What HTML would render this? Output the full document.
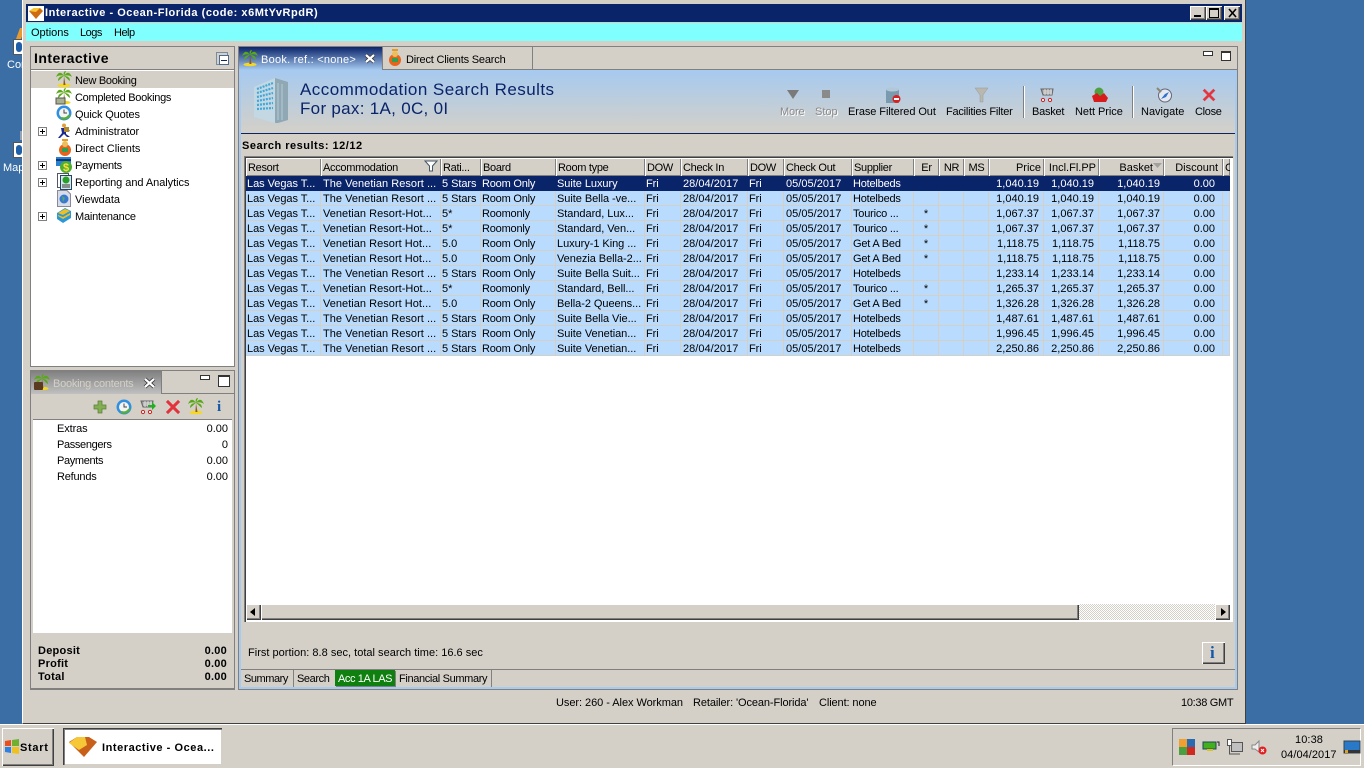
<!DOCTYPE html>
<html><head><meta charset="utf-8"><title>Interactive</title>
<style>
html,body{margin:0;padding:0;width:1364px;height:768px;overflow:hidden;background:#3a6ea5;font:11px "Liberation Sans",sans-serif;letter-spacing:0;color:#000}
.a{position:absolute;white-space:nowrap}
svg{position:absolute;overflow:visible}
.face{background:#d4d0c8}
.up{background:#d4d0c8;box-shadow:inset 1px 1px #fff,inset -1px -1px #404040,inset -2px -2px #808080}
.box{border:1px solid #808080;box-sizing:border-box}
.tree{left:75px}
.ex{left:38px;width:7px;height:7px;border:1px solid #808080;background:linear-gradient(#000,#000) center/5px 1px no-repeat,linear-gradient(#000,#000) center/1px 5px no-repeat,#fff}
table{position:absolute;left:246px;top:158px;width:984px;border-collapse:separate;border-spacing:0;table-layout:fixed}
th{height:18px;padding:2px 2px 0;background:#d4d0c8;box-shadow:inset 1px 1px #fff,inset -1px -1px #808080;font-weight:normal;text-align:left;overflow:hidden;white-space:nowrap;box-sizing:border-box;letter-spacing:-.3px;line-height:15px}
td{height:15px;padding:2px 1px 0;background:#b9dbfd;border-right:1px solid #d4d0c8;border-bottom:1px solid #d4d0c8;overflow:hidden;white-space:nowrap;box-sizing:border-box;line-height:12px;letter-spacing:-.05px}
td:nth-child(4),td:nth-child(10){letter-spacing:-.2px}
td:nth-child(2),td:nth-child(7),td:nth-child(9){letter-spacing:.03px;padding-left:2px}
tr.s td{background:#0a246a;color:#fff;border-color:#0a246a}
.r{text-align:right;padding-right:4px;letter-spacing:0}
td.r{letter-spacing:0;padding-right:4px}
td:nth-child(17).r{padding-right:7px}
td:nth-child(16).r{padding-right:3px}
.c{text-align:center}
</style></head><body>
<svg width="0" height="0" style="position:absolute"><defs>
<g id="palm"><ellipse cx="8" cy="14.5" rx="6.5" ry="1.8" fill="#f5d820"/><path d="M8 5L9.500 14H7.400Z" fill="#8a5a20"/><path d="M8 5C5 0 2 1 0 6C3 4 5 4 8 5ZM8 5C11 0 14 1 16 6C13 4 11 4 8 5ZM8 5C7 2 8 0 10 0C9 2 9 3 8 5ZM8 5C5 5 2 6 2 10C5 8 6 6 8 5ZM8 5C11 5 14 6 14 10C11 8 10 6 8 5Z" fill="#5aa818"/></g>
<g id="clock"><circle cx="8" cy="8" r="7.5" fill="#2f8fe0"/><circle cx="8" cy="8" r="5" fill="#f4f4f4"/><path d="M8 4.500V8H11" stroke="#444" fill="none"/><path d="M4 13C7 16 12 15 15 10L12 10C11 12 8 13 6 12Z" fill="#58b030"/></g>
<g id="cart"><path d="M1 2H13L12 8H3Z" fill="#999" stroke="#666"/><path d="M3 4H12M3 6H12M5 2V8M8 2V8M11 2V8" stroke="#ddd"/><circle cx="3" cy="13" r="1.6" fill="#fff" stroke="#d02020"/><circle cx="10" cy="13" r="1.6" fill="#fff" stroke="#d02020"/></g>
<g id="x"><path d="M3 1L8 6L13 1L15 3L10 8L15 13L13 15L8 10L3 15L1 13L6 8L1 3Z" fill="#e8303a" stroke="#c8606a" stroke-width=".5"/></g>
</defs></svg>

<!-- desktop icons -->
<div class="a" style="left:13px;top:39px;width:11px;height:16px;background:#fff;border:1px solid #555;box-sizing:border-box"></div>
<div class="a" style="left:16px;top:42px;width:6px;height:10px;background:#1f5fa8;border-radius:3px"></div>
<div class="a" style="left:18px;top:28px;width:5px;height:11px;background:#e89a30;transform:skewX(-20deg)"></div>
<div class="a" style="left:7px;top:59px;color:#fff;font-size:11px">Con</div>
<div class="a" style="left:20px;top:131px;width:3px;height:9px;background:#9aa4b0"></div>
<div class="a" style="left:13px;top:142px;width:11px;height:16px;background:#fff;border:1px solid #555;box-sizing:border-box"></div>
<div class="a" style="left:16px;top:145px;width:6px;height:10px;background:#1f5fa8;border-radius:3px"></div>
<div class="a" style="left:3px;top:162px;color:#fff;font-size:11px">Map</div>

<!-- window -->
<div class="a face" style="left:22px;top:0;width:1224px;height:724px;border-left:1px solid #fff;border-right:1px solid #404040;border-bottom:1px solid #404040;box-sizing:border-box"></div>
<div class="a" style="left:26px;top:4px;width:1216px;height:18px;background:#0a246a"></div>
<svg style="left:28px;top:6px" width="16" height="15"><rect width="16" height="15" fill="#fff"/><path d="M1 5L6 2H12L15 5L8 13Z" fill="#d06a10"/><path d="M1 5L6 2H12L8 6Z" fill="#f6c430"/></svg>
<div class="a" style="left:45px;top:6px;color:#fff;font:bold 11px/15px 'Liberation Sans',sans-serif;letter-spacing:.53px">Interactive - Ocean-Florida (code: x6MtYvRpdR)</div>
<div class="a up" style="left:1190px;top:6px;width:16px;height:14px"></div>
<div class="a" style="left:1194px;top:15px;width:7px;height:2px;background:#000"></div>
<div class="a up" style="left:1206px;top:6px;width:16px;height:14px"></div>
<div class="a" style="left:1209px;top:8px;width:10px;height:10px;border:1px solid #000;border-top-width:2px;box-sizing:border-box"></div>
<div class="a up" style="left:1224px;top:6px;width:16px;height:14px"></div>
<svg style="left:1228px;top:9px" width="9" height="8"><path d="M1 0L8 8M8 0L1 8" stroke="#000" stroke-width="1.6"/></svg>
<div class="a" style="left:26px;top:23px;width:1216px;height:18px;background:#80ffff"></div>
<div class="a" style="left:31px;top:26px;line-height:14px">Options</div>
<div class="a" style="left:80px;top:26px;line-height:14px;letter-spacing:-.5px">Logs</div>
<div class="a" style="left:114px;top:26px;line-height:14px;letter-spacing:-.5px">Help</div>

<!-- left panel 1 -->
<div class="a box" style="left:30px;top:46px;width:205px;height:321px;background:#fff"></div>
<div class="a face" style="left:31px;top:47px;width:203px;height:22px;border-bottom:1px solid #808080"></div>
<div class="a" style="left:34px;top:50px;font:bold 14px/17px 'Liberation Sans',sans-serif;letter-spacing:.45px">Interactive</div>
<div class="a" style="left:216px;top:52px;width:10px;height:11px;border:1px solid #7a8aa0"></div>
<div class="a" style="left:219px;top:55px;width:10px;height:10px;border:1px solid #4a6a90;background:#fff;box-sizing:border-box"></div>
<div class="a" style="left:221px;top:60px;width:6px;height:1px;background:#0a246a"></div>
<div class="a face" style="left:31px;top:71px;width:203px;height:17px"></div>
<div class="a tree" style="top:74px;line-height:14px;letter-spacing:-.3px">New Booking</div>
<div class="a tree" style="top:91px;line-height:14px;letter-spacing:-.3px">Completed Bookings</div>
<div class="a tree" style="top:108px;line-height:14px;letter-spacing:-.15px">Quick Quotes</div>
<div class="a tree" style="top:125px;line-height:14px;letter-spacing:-.05px">Administrator</div>
<div class="a tree" style="top:142px;line-height:14px">Direct Clients</div>
<div class="a tree" style="top:159px;line-height:14px;letter-spacing:-.25px">Payments</div>
<div class="a tree" style="top:176px;line-height:14px;letter-spacing:-.05px">Reporting and Analytics</div>
<div class="a tree" style="top:193px;line-height:14px">Viewdata</div>
<div class="a tree" style="top:210px;line-height:14px;letter-spacing:-.2px">Maintenance</div>
<svg style="left:56px;top:71px" width="16" height="16"><use href="#palm"/></svg>
<svg style="left:56px;top:88px" width="16" height="16"><use href="#palm"/><rect x="0" y="10" width="9" height="6" fill="#a8b090" stroke="#555"/></svg>
<svg style="left:56px;top:105px" width="16" height="16"><use href="#clock"/></svg>
<svg style="left:58px;top:123px" width="15" height="16"><circle cx="6" cy="2.5" r="2" fill="#e0a040"/><path d="M3 5H9L12 8L8 9L8 11L12 14H9L6 11L2 15H0L4 10Z" fill="#1c2a90"/><rect x="6" y="4" width="5" height="5" fill="#b08a30"/></svg>
<svg style="left:57px;top:139px" width="16" height="17"><circle cx="8" cy="11" r="6" fill="#e8641c"/><circle cx="8" cy="5" r="3" fill="#e8c060"/><path d="M5 1H11" stroke="#e89a20" stroke-width="2"/><rect x="5" y="9" width="6" height="4" fill="#30a050"/></svg>
<svg style="left:56px;top:157px" width="16" height="17"><rect width="15" height="9" fill="#2a7fd0"/><rect y="2" width="15" height="2" fill="#103870"/><circle cx="10" cy="10" r="6" fill="#4caf30"/><text x="7" y="14" font-size="11" font-weight="bold" fill="#ffe040" font-family="Liberation Sans">$</text></svg>
<svg style="left:57px;top:173px" width="15" height="17"><rect x=".5" y=".5" width="11" height="14" fill="#fff" stroke="#556"/><rect x="3.500" y="2.500" width="11" height="14" fill="#d8e8e8" stroke="#246"/><circle cx="9" cy="7" r="3.500" fill="#28a028"/><path d="M5 12H13M5 14H13" stroke="#333"/></svg>
<svg style="left:57px;top:190px" width="14" height="17"><path d="M.5.5H10L13.500 4V16.500H.5Z" fill="#d8dce8" stroke="#889"/><circle cx="7" cy="9" r="4.500" fill="#3878d0"/><path d="M5 6L8 8L6 12Z" fill="#58a868"/></svg>
<svg style="left:56px;top:207px" width="16" height="17"><path d="M1 6L9 1L15 4V11L7 16L1 12Z" fill="#2a98d8"/><path d="M2 6L9 2L14 4L7 8ZM2 8L7 10L14 6V8L7 12L2 9Z" fill="#f0c020"/></svg>
<div class="a ex" style="top:127px"></div>
<div class="a ex" style="top:161px"></div>
<div class="a ex" style="top:178px"></div>
<div class="a ex" style="top:212px"></div>

<!-- left panel 2 -->
<div class="a" style="left:30px;top:370px;width:205px;height:320px;background:#d4d0c8;border:1px solid #808080;box-sizing:border-box;border-bottom-width:2px"></div>
<div class="a" style="left:31px;top:371px;width:130px;height:23px;background:linear-gradient(#808080,#c0c0c0);border-right:1px solid #808080"></div>
<div class="a" style="left:161px;top:393px;width:73px;height:1px;background:#808080"></div>
<svg style="left:34px;top:374px" width="16" height="16"><use href="#palm"/><rect x="0" y="8" width="9" height="8" rx="1" fill="#5a3a20"/></svg>
<div class="a" style="left:53px;top:377px;line-height:14px;color:#d4d0c8;letter-spacing:-.25px">Booking contents</div>
<svg style="left:144px;top:378px" width="11" height="10"><path d="M1 1L10 9M10 1L1 9" stroke="#333" stroke-width="3.800"/><path d="M1 1L10 9M10 1L1 9" stroke="#fff" stroke-width="2.200"/></svg>
<div class="a" style="left:200px;top:375px;width:8px;height:3px;background:#fff;border:1px solid #333"></div>
<div class="a" style="left:218px;top:375px;width:10px;height:9px;background:#fff;border:1px solid #333;border-top-width:2px"></div>
<svg style="left:93px;top:400px" width="14" height="14"><path d="M5 1H9V5H13V9H9V13H5V9H1V5H5Z" fill="#80b050" stroke="#607838" stroke-width=".7"/></svg>
<svg style="left:116px;top:399px" width="16" height="16"><use href="#clock"/></svg>
<svg style="left:140px;top:399px" width="16" height="16"><use href="#cart"/><path d="M8 6H12V3L16 7L12 11V8H8Z" fill="#20b020"/></svg>
<svg style="left:165px;top:399px" width="16" height="16"><use href="#x"/></svg>
<svg style="left:188px;top:398px" width="16" height="16"><use href="#palm"/></svg>
<div class="a" style="left:217px;top:397px;font:bold 15px/20px 'Liberation Serif',serif;color:#1458a8">i</div>
<div class="a" style="left:33px;top:419px;width:199px;height:1px;background:#808080"></div>
<div class="a" style="left:33px;top:420px;width:199px;height:213px;background:#fff"></div>
<div class="a" style="left:57px;top:422px;line-height:14px;letter-spacing:-.1px">Extras</div><div class="a" style="right:1136px;top:422px;line-height:14px">0.00</div>
<div class="a" style="left:57px;top:438px;line-height:14px;letter-spacing:-.35px">Passengers</div><div class="a" style="right:1136px;top:438px;line-height:14px">0</div>
<div class="a" style="left:57px;top:454px;line-height:14px;letter-spacing:-.35px">Payments</div><div class="a" style="right:1136px;top:454px;line-height:14px">0.00</div>
<div class="a" style="left:57px;top:470px;line-height:14px;letter-spacing:-.2px">Refunds</div><div class="a" style="right:1136px;top:470px;line-height:14px">0.00</div>
<div class="a" style="left:38px;top:644px;font-weight:bold;line-height:14px;letter-spacing:.25px">Deposit</div><div class="a" style="right:1137px;top:644px;font-weight:bold;line-height:14px;letter-spacing:.25px">0.00</div>
<div class="a" style="left:38px;top:657px;font-weight:bold;line-height:14px;letter-spacing:.25px">Profit</div><div class="a" style="right:1137px;top:657px;font-weight:bold;line-height:14px;letter-spacing:.25px">0.00</div>
<div class="a" style="left:38px;top:670px;font-weight:bold;line-height:14px;letter-spacing:.25px">Total</div><div class="a" style="right:1137px;top:670px;font-weight:bold;line-height:14px;letter-spacing:.25px">0.00</div>

<!-- main panel -->
<div class="a" style="left:238px;top:46px;width:1000px;height:644px;background:#d4d0c8;border:1px solid #808080;box-sizing:border-box"></div>
<div class="a" style="left:239px;top:69px;width:998px;height:1px;background:#808080"></div>
<div class="a" style="left:239px;top:70px;width:2px;height:619px;background:#a6caf0"></div>
<div class="a" style="left:1235px;top:70px;width:2px;height:619px;background:#a6caf0"></div>
<div class="a" style="left:239px;top:687px;width:998px;height:2px;background:#a6caf0"></div>
<div class="a" style="left:239px;top:47px;width:143px;height:23px;background:linear-gradient(#0a246a,#a6caf0)"></div>
<div class="a" style="left:382px;top:47px;width:151px;height:22px;border-left:1px solid #808080;border-right:1px solid #808080;box-sizing:border-box"></div>
<svg style="left:242px;top:50px" width="16" height="16"><use href="#palm"/></svg>
<div class="a" style="left:261px;top:53px;line-height:14px;color:#fff;letter-spacing:.25px">Book. ref.: &lt;none&gt;</div>
<svg style="left:365px;top:54px" width="10" height="9"><path d="M1 1L9 8M9 1L1 8" stroke="#333" stroke-width="3.800"/><path d="M1 1L9 8M9 1L1 8" stroke="#fff" stroke-width="2.200"/></svg>
<svg style="left:387px;top:49px" width="16" height="17"><circle cx="8" cy="11" r="6" fill="#e8641c"/><circle cx="8" cy="5" r="3" fill="#e8c060"/><path d="M5 1H11" stroke="#e89a20" stroke-width="2"/><rect x="5" y="9" width="6" height="4" fill="#30a050"/></svg>
<div class="a" style="left:406px;top:53px;line-height:14px;letter-spacing:-.18px">Direct Clients Search</div>
<div class="a" style="left:1203px;top:51px;width:8px;height:3px;background:#fff;border:1px solid #333"></div>
<div class="a" style="left:1221px;top:51px;width:8px;height:7px;background:#fff;border:1px solid #333;border-top-width:2px"></div>

<div class="a" style="left:241px;top:70px;width:994px;height:63px;background:linear-gradient(#a6caf0,#d4d0c8)"></div>
<div class="a" style="left:241px;top:133px;width:994px;height:1px;background:#0a246a"></div>
<svg style="left:254px;top:78px" width="34" height="46"><path d="M0 9L21 0V45L0 39Z" fill="#c4d8e4"/><path d="M21 0L34 4V42L24 45H21Z" fill="#8fa8b4"/><path d="M3 11L19 5M3 15L19 10M3 19L19 15M3 23L19 20M3 27L19 25M3 31L19 30" stroke="#3fa8d8" stroke-width="2.200" stroke-dasharray="2 1"/><path d="M24 5V42M28 6V42" stroke="#b4ccd6"/></svg>
<div class="a" style="left:300px;top:80px;font:17px/20px 'Liberation Sans',sans-serif;color:#0a246a;letter-spacing:.45px">Accommodation Search Results</div>
<div class="a" style="left:300px;top:99px;font:17px/20px 'Liberation Sans',sans-serif;color:#0a246a;letter-spacing:.3px">For pax: 1A, 0C, 0I</div>

<!-- toolbar -->
<svg style="left:787px;top:90px" width="12" height="10"><path d="M0 0H12L6 9Z" fill="#7a7a7a"/></svg>
<div class="a" style="left:822px;top:90px;width:8px;height:8px;background:#8a8a8a"></div>
<svg style="left:885px;top:87px" width="17" height="17"><path d="M1 2H14V16H1Z" fill="#7a9ab0"/><ellipse cx="7.500" cy="2.500" rx="6.500" ry="2" fill="#b0c8d8"/><circle cx="11.500" cy="12" r="4" fill="#d82020"/><rect x="9" y="11" width="5" height="2" fill="#fff"/></svg>
<svg style="left:975px;top:87px" width="13" height="16"><path d="M0 1H13L8 8V15H5V8Z" fill="#b8b8b0" stroke="#999" stroke-width=".5"/></svg>
<div class="a" style="left:1023px;top:86px;width:1px;height:32px;background:#808080;box-shadow:1px 0 #fff"></div>
<svg style="left:1040px;top:87px" width="16" height="16"><use href="#cart"/></svg>
<svg style="left:1092px;top:87px" width="16" height="16"><circle cx="7" cy="5" r="4.500" fill="#50a040"/><path d="M0 9L5 6L8 9L12 6L16 11L14 15H2Z" fill="#d81c1c"/></svg>
<div class="a" style="left:1132px;top:86px;width:1px;height:32px;background:#808080;box-shadow:1px 0 #fff"></div>
<svg style="left:1156px;top:87px" width="16" height="16"><circle cx="9" cy="8.500" r="6.500" fill="#e4e8f0" stroke="#667"/><path d="M5 12L9 7L13 5L10 10Z" fill="#3070d0"/><path d="M1 1L5 5" stroke="#887" stroke-width="2"/></svg>
<svg style="left:1202px;top:88px" width="14" height="14" viewBox="0 0 16 16"><use href="#x"/></svg>
<div class="a" style="left:780px;top:105px;line-height:14px;color:#8a8a8a;text-shadow:1px 1px #fff;letter-spacing:-.15px">More</div>
<div class="a" style="left:815px;top:105px;line-height:14px;color:#8a8a8a;text-shadow:1px 1px #fff">Stop</div>
<div class="a" style="left:848px;top:105px;line-height:14px;letter-spacing:-.08px">Erase Filtered Out</div>
<div class="a" style="left:946px;top:105px;line-height:14px;letter-spacing:-.22px">Facilities Filter</div>
<div class="a" style="left:1032px;top:105px;line-height:14px;letter-spacing:-.25px">Basket</div>
<div class="a" style="left:1075px;top:105px;line-height:14px;letter-spacing:-.05px">Nett Price</div>
<div class="a" style="left:1141px;top:105px;line-height:14px">Navigate</div>
<div class="a" style="left:1195px;top:105px;line-height:14px;letter-spacing:-.3px">Close</div>

<div class="a" style="left:242px;top:139px;font-weight:bold;line-height:14px;letter-spacing:.5px">Search results: 12/12</div>

<!-- table frame -->
<div class="a" style="left:244px;top:156px;width:989px;height:466px;background:#fff;box-shadow:inset 1px 1px #808080,inset 2px 2px #404040,inset -1px -1px #fff"></div>
<table>
<colgroup><col style="width:75px"><col style="width:120px"><col style="width:40px"><col style="width:75px"><col style="width:89px"><col style="width:36px"><col style="width:67px"><col style="width:36px"><col style="width:68px"><col style="width:62px"><col style="width:25px"><col style="width:25px"><col style="width:25px"><col style="width:55px"><col style="width:55px"><col style="width:65px"><col style="width:59px"><col style="width:7px"></colgroup>
<tr><th>Resort</th><th>Accommodation</th><th>Rati...</th><th>Board</th><th>Room type</th><th>DOW</th><th>Check In</th><th>DOW</th><th>Check Out</th><th>Supplier</th><th class="c">Er</th><th class="c">NR</th><th class="c">MS</th><th class="r" style="padding-right:3px">Price</th><th class="r" style="padding-right:3px">Incl.Fl.PP</th><th class="r" style="padding-right:11px">Basket</th><th class="r" style="padding-right:5px">Discount</th><th>C</th></tr>
<tr class="s"><td>Las Vegas T...</td><td>The Venetian Resort ...</td><td>5 Stars</td><td>Room Only</td><td>Suite Luxury</td><td>Fri</td><td>28/04/2017</td><td>Fri</td><td>05/05/2017</td><td>Hotelbeds</td><td class="c"></td><td></td><td></td><td class="r">1,040.19</td><td class="r">1,040.19</td><td class="r">1,040.19</td><td class="r">0.00</td><td></td></tr>
<tr><td>Las Vegas T...</td><td>The Venetian Resort ...</td><td>5 Stars</td><td>Room Only</td><td>Suite Bella -ve...</td><td>Fri</td><td>28/04/2017</td><td>Fri</td><td>05/05/2017</td><td>Hotelbeds</td><td class="c"></td><td></td><td></td><td class="r">1,040.19</td><td class="r">1,040.19</td><td class="r">1,040.19</td><td class="r">0.00</td><td></td></tr>
<tr><td>Las Vegas T...</td><td>Venetian Resort-Hot...</td><td>5*</td><td>Roomonly</td><td>Standard, Lux...</td><td>Fri</td><td>28/04/2017</td><td>Fri</td><td>05/05/2017</td><td>Tourico ...</td><td class="c">*</td><td></td><td></td><td class="r">1,067.37</td><td class="r">1,067.37</td><td class="r">1,067.37</td><td class="r">0.00</td><td></td></tr>
<tr><td>Las Vegas T...</td><td>Venetian Resort-Hot...</td><td>5*</td><td>Roomonly</td><td>Standard, Ven...</td><td>Fri</td><td>28/04/2017</td><td>Fri</td><td>05/05/2017</td><td>Tourico ...</td><td class="c">*</td><td></td><td></td><td class="r">1,067.37</td><td class="r">1,067.37</td><td class="r">1,067.37</td><td class="r">0.00</td><td></td></tr>
<tr><td>Las Vegas T...</td><td>Venetian Resort Hot...</td><td>5.0</td><td>Room Only</td><td>Luxury-1 King ...</td><td>Fri</td><td>28/04/2017</td><td>Fri</td><td>05/05/2017</td><td>Get A Bed</td><td class="c">*</td><td></td><td></td><td class="r">1,118.75</td><td class="r">1,118.75</td><td class="r">1,118.75</td><td class="r">0.00</td><td></td></tr>
<tr><td>Las Vegas T...</td><td>Venetian Resort Hot...</td><td>5.0</td><td>Room Only</td><td>Venezia Bella-2...</td><td>Fri</td><td>28/04/2017</td><td>Fri</td><td>05/05/2017</td><td>Get A Bed</td><td class="c">*</td><td></td><td></td><td class="r">1,118.75</td><td class="r">1,118.75</td><td class="r">1,118.75</td><td class="r">0.00</td><td></td></tr>
<tr><td>Las Vegas T...</td><td>The Venetian Resort ...</td><td>5 Stars</td><td>Room Only</td><td>Suite Bella Suit...</td><td>Fri</td><td>28/04/2017</td><td>Fri</td><td>05/05/2017</td><td>Hotelbeds</td><td class="c"></td><td></td><td></td><td class="r">1,233.14</td><td class="r">1,233.14</td><td class="r">1,233.14</td><td class="r">0.00</td><td></td></tr>
<tr><td>Las Vegas T...</td><td>Venetian Resort-Hot...</td><td>5*</td><td>Roomonly</td><td>Standard, Bell...</td><td>Fri</td><td>28/04/2017</td><td>Fri</td><td>05/05/2017</td><td>Tourico ...</td><td class="c">*</td><td></td><td></td><td class="r">1,265.37</td><td class="r">1,265.37</td><td class="r">1,265.37</td><td class="r">0.00</td><td></td></tr>
<tr><td>Las Vegas T...</td><td>Venetian Resort Hot...</td><td>5.0</td><td>Room Only</td><td>Bella-2 Queens...</td><td>Fri</td><td>28/04/2017</td><td>Fri</td><td>05/05/2017</td><td>Get A Bed</td><td class="c">*</td><td></td><td></td><td class="r">1,326.28</td><td class="r">1,326.28</td><td class="r">1,326.28</td><td class="r">0.00</td><td></td></tr>
<tr><td>Las Vegas T...</td><td>The Venetian Resort ...</td><td>5 Stars</td><td>Room Only</td><td>Suite Bella Vie...</td><td>Fri</td><td>28/04/2017</td><td>Fri</td><td>05/05/2017</td><td>Hotelbeds</td><td class="c"></td><td></td><td></td><td class="r">1,487.61</td><td class="r">1,487.61</td><td class="r">1,487.61</td><td class="r">0.00</td><td></td></tr>
<tr><td>Las Vegas T...</td><td>The Venetian Resort ...</td><td>5 Stars</td><td>Room Only</td><td>Suite Venetian...</td><td>Fri</td><td>28/04/2017</td><td>Fri</td><td>05/05/2017</td><td>Hotelbeds</td><td class="c"></td><td></td><td></td><td class="r">1,996.45</td><td class="r">1,996.45</td><td class="r">1,996.45</td><td class="r">0.00</td><td></td></tr>
<tr><td>Las Vegas T...</td><td>The Venetian Resort ...</td><td>5 Stars</td><td>Room Only</td><td>Suite Venetian...</td><td>Fri</td><td>28/04/2017</td><td>Fri</td><td>05/05/2017</td><td>Hotelbeds</td><td class="c"></td><td></td><td></td><td class="r">2,250.86</td><td class="r">2,250.86</td><td class="r">2,250.86</td><td class="r">0.00</td><td></td></tr>
</table>
<svg style="left:1153px;top:163px" width="9" height="5"><path d="M0 0H9L4.500 5Z" fill="#a0a0a0"/></svg>
<svg style="left:424px;top:160px" width="14" height="12"><path d="M1 1H13L8.500 6V11H5.500V6Z" fill="#fff" stroke="#456" stroke-width="1"/></svg>

<!-- scrollbar -->
<div class="a" style="left:246px;top:604px;width:984px;height:16px;background:repeating-conic-gradient(#fff 0 25%,#d4d0c8 0 50%) 0 0/2px 2px"></div>
<div class="a up" style="left:246px;top:604px;width:15px;height:16px"></div>
<svg style="left:250px;top:608px" width="5" height="8"><path d="M5 0V8L0 4Z" fill="#000"/></svg>
<div class="a up" style="left:261px;top:604px;width:818px;height:16px"></div>
<div class="a up" style="left:1215px;top:604px;width:15px;height:16px"></div>
<svg style="left:1221px;top:608px" width="5" height="8"><path d="M0 0V8L5 4Z" fill="#000"/></svg>

<div class="a" style="left:248px;top:646px;line-height:14px;letter-spacing:.015px">First portion: 8.8 sec, total search time: 16.6 sec</div>
<div class="a" style="left:1202px;top:642px;width:23px;height:22px;background:#d4d0c8;box-shadow:inset 1px 1px #fff,inset -1px -1px #404040,inset -2px -2px #808080"></div>
<div class="a" style="left:1210px;top:642px;font:bold 17px/22px 'Liberation Serif',serif;color:#1458a8">i</div>

<!-- bottom tabs -->
<div class="a" style="left:241px;top:669px;width:994px;height:1px;background:#808080"></div>
<div class="a" style="left:244px;top:672px;line-height:14px;letter-spacing:-.45px">Summary</div>
<div class="a" style="left:293px;top:670px;width:1px;height:17px;background:#808080"></div>
<div class="a" style="left:297px;top:672px;line-height:14px;letter-spacing:-.4px">Search</div>
<div class="a" style="left:335px;top:670px;width:60px;height:16px;background:#0f800f;box-shadow:1px 1px #808080"></div>
<div class="a" style="left:338px;top:672px;line-height:14px;color:#fff;letter-spacing:-.4px">Acc 1A LAS</div>
<div class="a" style="left:399px;top:672px;line-height:14px;letter-spacing:-.35px">Financial Summary</div>
<div class="a" style="left:491px;top:670px;width:1px;height:17px;background:#808080"></div>

<!-- status -->
<div class="a" style="left:556px;top:696px;line-height:14px;letter-spacing:-.05px">User: 260 - Alex Workman</div>
<div class="a" style="left:693px;top:696px;line-height:14px;letter-spacing:-.1px">Retailer: 'Ocean-Florida'</div>
<div class="a" style="left:819px;top:696px;line-height:14px;letter-spacing:-.1px">Client: none</div>
<div class="a" style="left:1181px;top:696px;line-height:14px;letter-spacing:-.3px">10:38 GMT</div>

<!-- taskbar -->
<div class="a face" style="left:0;top:724px;width:1364px;height:44px;border-top:1px solid #fff;box-sizing:border-box"></div>
<div class="a up" style="left:2px;top:728px;width:52px;height:38px"></div>
<svg style="left:4px;top:739px" width="16" height="16"><path d="M1 2L7 1V7H1Z" fill="#e85020"/><path d="M8 1L15 0V7H8Z" fill="#70b030"/><path d="M1 8H7V14L1 13Z" fill="#3080e0"/><path d="M8 8H15V15L8 14Z" fill="#f0c020"/></svg>
<div class="a" style="left:20px;top:741px;font-weight:bold;line-height:14px;letter-spacing:.7px">Start</div>
<div class="a" style="left:63px;top:728px;width:159px;height:37px;background:#fff;box-shadow:inset 1px 1px #404040,inset 2px 2px #808080,inset -1px -1px #d4d0c8"></div>
<svg style="left:69px;top:737px" width="29" height="20"><path d="M0 5L8 0H20L28 5L15 20Z" fill="#c8601a"/><path d="M0 6L8 0H16L18 8L10 13Z" fill="#f6c838"/></svg>
<div class="a" style="left:102px;top:741px;font-weight:bold;line-height:14px;letter-spacing:.55px">Interactive - Ocea...</div>
<div class="a" style="left:1172px;top:728px;width:189px;height:38px;border:1px solid #808080;border-right-color:#fff;border-bottom-color:#fff;box-sizing:border-box"></div>
<svg style="left:1179px;top:739px" width="16" height="16"><rect width="8" height="8" fill="#f0a030"/><rect x="8" width="8" height="8" fill="#2a6ab0"/><rect y="8" width="8" height="8" fill="#4aa040"/><rect x="8" y="8" width="8" height="8" fill="#d02a20"/></svg>
<svg style="left:1203px;top:741px" width="16" height="11"><rect y="1" width="13" height="7" fill="#40b020" stroke="#245"/><rect x="4" y="8" width="6" height="2" fill="#e0c020"/><path d="M14 1H16V5" stroke="#222" fill="none"/></svg>
<svg style="left:1227px;top:739px" width="16" height="16"><rect x="4.500" y="3.500" width="11" height="9" fill="#c0c0c0" stroke="#555"/><rect x=".5" y=".5" width="4" height="6" fill="#fff" stroke="#555"/><path d="M2.500 6V15H13" stroke="#555" fill="none"/></svg>
<svg style="left:1251px;top:739px" width="17" height="17"><path d="M1 6H4L8 2V13L4 10H1Z" fill="#eee" stroke="#888"/><circle cx="11.500" cy="11.500" r="4" fill="#e02020"/><path d="M10 10L13 13M13 10L10 13" stroke="#fff"/></svg>
<div class="a" style="left:1295px;top:733px;line-height:14px;letter-spacing:.1px">10:38</div>
<div class="a" style="left:1281px;top:748px;line-height:14px;letter-spacing:.05px">04/04/2017</div>
<svg style="left:1344px;top:741px" width="16" height="13"><rect width="16" height="12" fill="#2a78c8" stroke="#345"/><rect y="9" width="16" height="3" fill="#333"/><rect x="1" y="9" width="3" height="3" fill="#e0a020"/></svg>
</body></html>
